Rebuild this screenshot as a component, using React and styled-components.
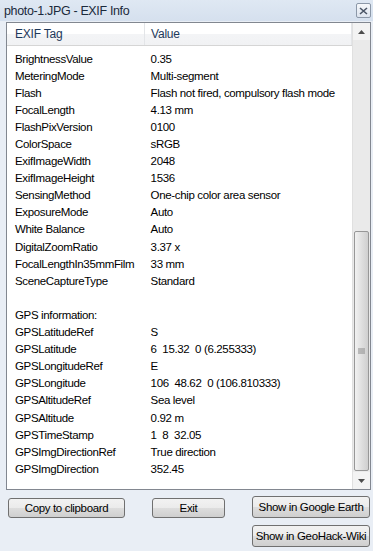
import React from 'react';
import styled, { createGlobalStyle } from 'styled-components';

const Global = createGlobalStyle`
  html, body { margin: 0; padding: 0; }
  body {
    width: 373px;
    height: 551px;
    overflow: hidden;
    font-family: "Liberation Sans", "DejaVu Sans", sans-serif;
    background: #e9eef5;
  }
`;

const rows = [
  ['BrightnessValue', '0.35'],
  ['MeteringMode', 'Multi-segment'],
  ['Flash', 'Flash not fired, compulsory flash mode'],
  ['FocalLength', '4.13 mm'],
  ['FlashPixVersion', '0100'],
  ['ColorSpace', 'sRGB'],
  ['ExifImageWidth', '2048'],
  ['ExifImageHeight', '1536'],
  ['SensingMethod', 'One-chip color area sensor'],
  ['ExposureMode', 'Auto'],
  ['White Balance', 'Auto'],
  ['DigitalZoomRatio', '3.37 x'],
  ['FocalLengthIn35mmFilm', '33 mm'],
  ['SceneCaptureType', 'Standard'],
  ['', ''],
  ['GPS information:', ''],
  ['GPSLatitudeRef', 'S'],
  ['GPSLatitude', '6  15.32  0 (6.255333)'],
  ['GPSLongitudeRef', 'E'],
  ['GPSLongitude', '106  48.62  0 (106.810333)'],
  ['GPSAltitudeRef', 'Sea level'],
  ['GPSAltitude', '0.92 m'],
  ['GPSTimeStamp', '1  8  32.05'],
  ['GPSImgDirectionRef', 'True direction'],
  ['GPSImgDirection', '352.45'],
];

const Window = styled.div`
  width: 373px;
  height: 551px;
  display: flex;
  flex-direction: column;
`;

const TitleBar = styled.div`
  height: 21px;
  display: flex;
  align-items: center;
  justify-content: space-between;
  padding: 0 2px 0 4px;
  background: linear-gradient(#dfe8f3, #d5e0ee);
  color: #1b2a3c;
  font-size: 12.5px;
  letter-spacing: -0.35px;
`;

const CloseBox = styled.div`
  width: 13px;
  height: 13px;
  border: 1px solid #8c98a8;
  border-radius: 2px;
  background: linear-gradient(#f6f8fb, #dde4ee);
  display: flex;
  align-items: center;
  justify-content: center;
`;

const ListView = styled.div`
  margin: 1px 2px 0 6px;
  height: 468px;
  border: 1px solid #828790;
  background: #fff;
  display: flex;
  box-sizing: border-box;
`;

const ListBody = styled.div`
  flex: 1;
  display: flex;
  flex-direction: column;
  overflow: hidden;
`;

const Header = styled.div`
  height: 22px;
  display: flex;
  background: linear-gradient(#ffffff 0%, #ffffff 50%, #f3f4f6 51%, #f1f2f4 100%);
  border-bottom: 1px solid #d5d5d5;
  margin-bottom: 4px;
  flex-shrink: 0;
`;

const HeadCell = styled.div`
  width: ${p => p.$w};
  flex: ${p => (p.$grow ? 1 : 'none')};
  box-sizing: border-box;
  padding-left: ${p => p.$pad}px;
  display: flex;
  align-items: center;
  color: #1e395b;
  font-size: 12px;
  letter-spacing: -0.2px;
  border-right: 1px solid #e3e5e8;
`;

const Row = styled.div`
  height: 17.1px;
  display: flex;
  align-items: center;
  font-size: 11.5px;
  letter-spacing: -0.35px;
  color: #000;
  white-space: pre;
  flex-shrink: 0;
`;

const Cell = styled.div`
  width: ${p => p.$w};
  box-sizing: border-box;
  padding-left: ${p => p.$pad}px;
  overflow: hidden;
`;

const ScrollBar = styled.div`
  width: 17px;
  display: flex;
  flex-direction: column;
  background: #eaeaea;
  border-left: 1px solid #e0e0e0;
  flex-shrink: 0;
`;

const Arrow = styled.div`
  height: 17px;
  display: flex;
  align-items: center;
  justify-content: center;
  background: #f3f3f3;
`;

const Track = styled.div`
  flex: 1;
  display: flex;
  flex-direction: column;
  justify-content: flex-end;
  padding: 0 0 1px 0;
`;

const Thumb = styled.div`
  height: 238px;
  margin: 0 1px;
  border: 1px solid #979797;
  border-radius: 2px;
  background: linear-gradient(90deg, #f1f1f1, #dcdcdc 60%, #cfcfcf);
  display: flex;
  align-items: center;
  justify-content: center;
`;

const Buttons = styled.div`
  display: grid;
  grid-template-columns: 117px 73px 118px;
  justify-content: space-between;
  row-gap: 7px;
  padding: 8px 3px 0 8px;
`;

const Button = styled.div`
  height: ${p => (p.$tall ? 22 : 20)}px;
  margin-top: ${p => (p.$up ? -2 : 0)}px;
  box-sizing: border-box;
  border: 1px solid #707070;
  border-radius: 3px;
  background: linear-gradient(#f2f2f2 0%, #ebebeb 50%, #dddddd 51%, #cfcfcf 100%);
  display: flex;
  align-items: center;
  justify-content: center;
  font-size: 11.5px;
  letter-spacing: -0.35px;
  color: #000;
  white-space: nowrap;
  grid-column: ${p => p.$col || 'auto'};
`;

const TriUp = () => (
  <svg width="7" height="4" viewBox="0 0 7 4"><path d="M0 4 L3.5 0 L7 4 Z" fill="#4d4d4d" /></svg>
);
const TriDown = () => (
  <svg width="7" height="4" viewBox="0 0 7 4"><path d="M0 0 L3.5 4 L7 0 Z" fill="#4d4d4d" /></svg>
);

export default function App() {
  return (
    <Window>
      <Global />
      <TitleBar>
        <span>photo-1.JPG - EXIF Info</span>
        <CloseBox>
          <svg width="9" height="8" viewBox="0 0 9 8">
            <path d="M1 1 L8 7 M8 1 L1 7" stroke="#4a5566" strokeWidth="1.6" />
          </svg>
        </CloseBox>
      </TitleBar>
      <ListView>
        <ListBody>
          <Header>
            <HeadCell $w="138px" $pad={8}>EXIF Tag</HeadCell>
            <HeadCell $grow $pad={6}>Value</HeadCell>
          </Header>
          {rows.map(([tag, val], i) => (
            <Row key={i}>
              <Cell $w="138px" $pad={8}>{tag}</Cell>
              <Cell $w="208px" $pad={6}>{val}</Cell>
            </Row>
          ))}
        </ListBody>
        <ScrollBar>
          <Arrow><TriUp /></Arrow>
          <Track>
            <Thumb>
              <svg width="7" height="7" viewBox="0 0 7 7">
                <path d="M0 1h7M0 3h7M0 5h7" stroke="#8a8a8a" strokeWidth="1" />
              </svg>
            </Thumb>
          </Track>
          <Arrow><TriDown /></Arrow>
        </ScrollBar>
      </ListView>
      <Buttons>
        <Button>Copy to clipboard</Button>
        <Button>Exit</Button>
        <Button $tall $up>Show in Google Earth</Button>
        <Button $tall $col="3">Show in GeoHack-Wiki</Button>
      </Buttons>
    </Window>
  );
}
